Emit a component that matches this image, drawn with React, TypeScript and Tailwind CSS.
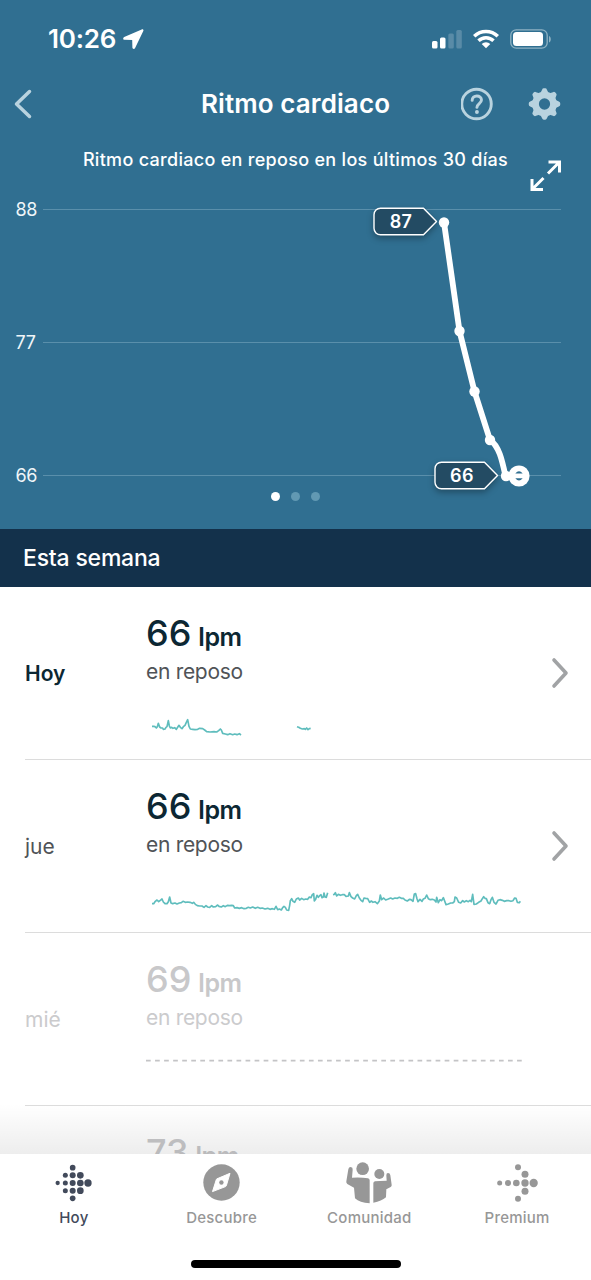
import clsx from "clsx";
import type { ReactNode } from "react";

type Day = {
	label: string;
	bpm: number;
	status: "today" | "done" | "locked";
	viewBox?: string;
	segments?: string[];
};

const days: Day[] = [
	{
		label: "Hoy",
		bpm: 66,
		status: "today",
		viewBox: "18 0 1128 105",
		segments: [
			"36,49 41,49 45,50 49,54 52,50 55,40 59,51 63,54 68,54 70,58 75,57 78,52 81,50 85,32 88,48 91,54 95,52 99,55 104,53 109,58 113,52 117,46 121,52 126,56 130,50 135,46 139,37 143,29 147,49 151,57 158,58 165,59 173,58 179,55 188,56 194,60 200,65 210,66 222,65 230,66 236,62 241,57 244,60 248,70 256,72 263,74 270,71 278,74 284,72 291,74 298,71 303,75",
			"471,50 476,52 481,55 487,57 493,56 496,58 500,54 504,59 508,56 512,55",
		],
	},
	{
		label: "jue",
		bpm: 66,
		status: "done",
		viewBox: "48 39 1128 105",
		segments: [
			"66,101 71,101 76,94 81,90 86,95 91,91 96,87 100,96 105,101 111,101 115,95 119,81 123,99 128,101 135,99 141,102 148,99 154,98 159,94 166,97 173,96 180,97 187,100 191,97 196,103 202,107 209,108 216,108 222,112 228,107 233,111 239,112 245,107 250,111 257,110 263,105 267,109 274,111 280,107 286,110 292,106 299,107 305,106 310,107 314,114 321,113 328,115 335,113 342,116 349,115 355,112 361,114 368,111 376,115 383,112 390,115 397,114 405,117 413,115 420,118 427,116 433,118 438,109 443,119 448,117 454,120 458,113 462,109 466,112 470,120 476,121 479,106 481,92 485,86 489,94 494,97 499,87 505,84 509,90 515,85 521,89 527,87 533,88 538,81 543,83 547,74 551,71 553,93 557,88 561,76 565,82 569,77 573,74 576,83 580,81 582,69 585,81 589,82 593,68",
			"609,74 613,73 616,68 620,78 625,73 631,76 637,74 643,74 648,79 655,78 658,68 663,80 668,84 674,87 679,77 683,73 688,84 693,91 698,95 702,84 707,85 713,86 719,97 724,93 729,97 735,95 742,101 748,93 751,75 755,89 761,84 767,90 775,87 782,84 788,87 795,84 802,85 808,82 814,85 820,85 825,90 832,93 838,88 843,89 849,94 853,72 857,71 861,86 864,95 870,88 876,94 880,87 885,85 890,75 895,86 901,89 907,88 913,90 918,96 920,82 925,98 930,89 935,92 940,83 944,93 948,104 955,102 962,99 968,99 973,95 975,81 980,84 986,97 992,99 998,92 1003,96 1009,92 1015,95 1020,91 1024,95 1028,73 1032,103 1039,102 1046,97 1053,93 1057,86 1061,80 1065,85 1069,86 1074,98 1079,101 1083,89 1087,82 1092,97 1098,102 1104,91 1110,89 1117,91 1123,94 1130,92 1137,92 1143,94 1149,92 1154,84 1158,85 1162,97 1168,98 1171,94",
		],
	},
	{ label: "mié", bpm: 69, status: "locked" },
];

const chartPoints = [
	[444, 32.5],
	[459.5, 141],
	[474.5, 201.5],
	[490, 250],
	[506, 286],
];

const hoyDots = [
	[174, 248, 6.5],
	[197, 225, 7.5],
	[197, 248, 7.5],
	[197, 271, 7.5],
	[219, 202, 8.5],
	[219, 225, 9],
	[219, 248, 9],
	[219, 271, 9],
	[219, 294, 8.5],
	[242, 225, 10],
	[242, 248, 10],
	[242, 271, 10],
	[265, 248, 11],
];

const premiumDots = [
	[599, 248, 7.5],
	[624, 248, 9],
	[649, 248, 10],
	[675, 248, 11],
	[701, 248, 12.5],
	[654, 201, 9],
	[675, 222, 10.5],
	[675, 273, 10.5],
	[654, 295, 9],
];

function StatusBar() {
	return (
		<div className="flex h-[78px] items-center justify-between pr-[39px] pl-[48px]">
			<div className="flex items-center gap-[7px]">
				<span className="text-[26px] leading-none font-semibold tracking-[-0.2px]">
					10:26
				</span>
				<svg width="21" height="20" viewBox="0 0 21 20" fill="#fff">
					<path d="M18.7.4 1.2 8C-.4 8.8 0 10.8 1.500 10.8l7.700.2.2 7.500c0 1.600 2 2 2.700.5L20.300 2.100C20.900.8 19.900-.1 18.700.4Z" />
				</svg>
			</div>
			<div className="flex items-center">
				<svg width="30" height="20" viewBox="0 0 30 20" fill="#fff">
					<rect x="0" y="12" width="5.5" height="7.5" rx="1.5" />
					<rect x="8" y="8.5" width="5.5" height="11" rx="1.5" />
					<rect x="16.3" y="4.5" width="5.5" height="15" rx="1.5" opacity=".2" />
					<rect x="24.3" y="1" width="5.5" height="18.5" rx="1.5" opacity=".2" />
				</svg>
				<svg className="ml-[11px]" width="26" height="20" viewBox="0 0 26 20">
					<g fill="none" stroke="#fff" strokeWidth="3.5">
						<path d="M1.2 7.2a17 17 0 0 1 23.6 0" />
						<path d="M5.5 11.8a10.8 10.8 0 0 1 15 0" />
					</g>
					<path d="M13 19.3 8.7 15a6.2 6.2 0 0 1 8.6 0Z" fill="#fff" />
				</svg>
				<svg className="ml-[11px]" width="42" height="20" viewBox="0 0 42 20">
					<rect
						x=".8"
						y=".8"
						width="36.4"
						height="18.4"
						rx="5.5"
						fill="none"
						stroke="#8fb3c4"
						strokeWidth="1.3"
					/>
					<rect x="3" y="3" width="30" height="14" rx="3.5" fill="#fff" />
					<path d="M39 7v6.4c2.4-.8 2.4-5.6 0-6.4Z" fill="#8fb3c4" />
				</svg>
			</div>
		</div>
	);
}

function GearIcon() {
	return (
		<svg width="34" height="34" viewBox="-17 -17 34 34">
			<circle r="9.3" fill="none" stroke="#b9d3df" strokeWidth="7" />
			{[0, 45, 90, 135, 180, 225, 270, 315].map((angle) => (
				<path
					key={angle}
					d="M-4-11.500-2.500-14.800Q-2-16.200-.8-16.200H.8Q2-16.200 2.500-14.800L4-11.500Z"
					fill="#b9d3df"
					transform={`rotate(${angle})`}
				/>
			))}
		</svg>
	);
}

function NavBar() {
	return (
		<div className="grid h-[52px] grid-cols-[100px_1fr_100px] items-center pr-[30px] pl-[14px]">
			<svg width="18" height="30" viewBox="0 0 18 30" fill="none">
				<path
					d="M15.5 2.5 2.5 15l13 12.5"
					stroke="#b9d3df"
					strokeWidth="3.5"
					strokeLinecap="round"
					strokeLinejoin="round"
				/>
			</svg>
			<h1 className="ml-[16px] text-center text-[26px] leading-none font-semibold tracking-[0.1px] whitespace-nowrap">
				Ritmo cardiaco
			</h1>
			<div className="flex items-center justify-end gap-[34px]">
				<svg width="34" height="34" viewBox="0 0 34 34" fill="none">
					<circle cx="16" cy="17" r="15.2" stroke="#b9d3df" strokeWidth="3" />
					<path
						d="M11.500 13.300c0-3 2.100-4.600 4.800-4.600s4.800 1.700 4.800 4.200c0 3.600-4.700 3.700-4.700 7.600"
						stroke="#b9d3df"
						strokeWidth="3"
						strokeLinecap="round"
					/>
					<circle cx="16.400" cy="25.300" r="2" fill="#b9d3df" />
				</svg>
				<GearIcon />
			</div>
		</div>
	);
}

function ChartFlag({ x, y, value }: { x: number; y: number; value: number }) {
	return (
		<g transform={`translate(${x} ${y})`}>
			<path
				d="M7-13.300H50L63 0 50 13.300H7a6.500 6.500 0 0 1-6.500-6.500V-6.800A6.500 6.500 0 0 1 7-13.300Z"
				fill="#234b63"
				stroke="#fff"
				strokeWidth="1.4"
				strokeLinejoin="round"
				className="drop-shadow-[0_3px_3px_rgba(0,0,0,0.3)]"
			/>
			<text
				x="27.5"
				y="6.5"
				textAnchor="middle"
				fill="#fff"
				className="text-[18px] font-semibold tracking-[0.4px]"
			>
				{value}
			</text>
		</g>
	);
}

function RestingChart() {
	return (
		<svg
			className="overflow-visible"
			width="591"
			height="298"
			viewBox="0 0 591 298"
		>
			{[88, 77, 66].map((value, i) => (
				<g key={value}>
					<text
						x="15.5"
						y={26 + i * 133}
						fill="#f0f6f9"
						className="text-[18px] tracking-[-0.3px]"
					>
						{value}
					</text>
					<path d={`M43 ${19.5 + i * 133}H561`} stroke="#5a8fab" />
				</g>
			))}
			<path
				d="M444 32.500 459.500 141 474.500 201.500 490 250C499 256 502 270 505.500 286H519"
				fill="none"
				stroke="#fff"
				strokeWidth="5.8"
				strokeLinejoin="round"
			/>
			{chartPoints.map(([cx, cy]) => (
				<circle key={cx} cx={cx} cy={cy} r="5.2" fill="#fff" />
			))}
			<circle cx="519" cy="286" r="10.6" fill="#fff" />
			<path
				d="M515.300 283.500q3.700-4.600 7.400 0ZM515.300 288.300q3.700 4.600 7.400 0Z"
				fill="#306f91"
			/>
			<ChartFlag x={373.5} y={31.5} value={87} />
			<ChartFlag x={434.5} y={285.5} value={66} />
		</svg>
	);
}

function Header() {
	return (
		<header className="relative h-[529px] bg-[#306f91] text-white">
			<StatusBar />
			<NavBar />
			<p className="h-[60px] text-center text-[18px] leading-[60px] font-medium tracking-[0.3px] whitespace-nowrap">
				Ritmo cardiaco en reposo en los últimos 30 días
			</p>
			<svg
				className="absolute top-[160px] right-[29px]"
				width="32"
				height="32"
				viewBox="0 0 32 32"
				fill="none"
				stroke="#fff"
				strokeWidth="3"
			>
				<path d="M18.500 2H29.500V12.500M29.500 2 18 13.500M2 19v10.500h11M2 29.500l11.500-11.500" />
			</svg>
			<RestingChart />
			<div className="flex h-[16px] items-center justify-center gap-[11px]">
				<span className="size-[9px] rounded-full bg-white" />
				<span className="size-[9px] rounded-full bg-[#6199b3]" />
				<span className="size-[9px] rounded-full bg-[#6199b3]" />
			</div>
		</header>
	);
}

function Bpm({ value, locked }: { value: number; locked: boolean }) {
	return (
		<p
			className={clsx(
				"text-[36px] leading-[44px] font-medium whitespace-nowrap",
				locked ? "text-[#c8c8ca]" : "text-[#0c2733]"
			)}
		>
			{value}
			<span className="ml-[7px] text-[25px] leading-none font-semibold tracking-[-0.5px]">
				lpm
			</span>
		</p>
	);
}

function DayRow({ day }: { day: Day }) {
	const locked = day.status === "locked";

	return (
		<li className="ml-[25px] flex h-[173px] items-center border-b border-[#dcdcdc] pr-[22px]">
			<span
				className={clsx(
					"w-[121px] text-[21px] leading-none",
					day.status === "today" && "font-semibold text-[#0c2733]",
					day.status === "done" && "text-[#505357]",
					locked && "text-[#cbcbcd]"
				)}
			>
				{day.label}
			</span>
			<div className="flex h-full w-[378px] flex-col pt-[24px]">
				<Bpm value={day.bpm} locked={locked} />
				<p
					className={clsx(
						"text-[21px] leading-[34px] tracking-[-0.3px]",
						locked ? "text-[#cbcbcd]" : "text-[#505357]"
					)}
				>
					en reposo
				</p>
				{day.segments && (
					<svg
						className="mt-[21px]"
						width="376"
						height="35"
						viewBox={day.viewBox}
						fill="none"
						stroke="#5fbdbd"
						strokeWidth="5"
						strokeLinejoin="round"
					>
						{day.segments.map((points) => (
							<polyline key={points} points={points} />
						))}
					</svg>
				)}
				{locked && (
					<svg className="mt-[21px]" width="378" height="10">
						<path
							d="M0 4.700H377"
							stroke="#c4c4c6"
							strokeWidth="1.7"
							strokeDasharray="4.700 4.350"
						/>
					</svg>
				)}
			</div>
			{!locked && (
				<svg className="ml-auto" width="18" height="32" viewBox="0 0 18 32" fill="none">
					<path
						d="M3 3 15 16 3 29"
						stroke="#a1a3a5"
						strokeWidth="3.6"
						strokeLinecap="round"
						strokeLinejoin="round"
					/>
				</svg>
			)}
		</li>
	);
}

function Dots({ dots }: { dots: number[][] }) {
	return dots.map(([cx, cy, r]) => (
		<circle key={`${cx}-${cy}`} cx={cx} cy={cy} r={r} />
	));
}

function Tab({
	label,
	active,
	children,
}: {
	label: string;
	active?: boolean;
	children: ReactNode;
}) {
	return (
		<li
			className={clsx(
				"flex flex-1 flex-col items-center",
				active ? "text-[#424a5b]" : "text-[#979797]"
			)}
		>
			<div className="flex h-[57px] items-center">{children}</div>
			<span className="-mt-[4px] text-[15px] leading-[21px] font-medium tracking-[0.25px]">
				{label}
			</span>
		</li>
	);
}

function TabBar() {
	return (
		<nav className="flex h-[126px] flex-col items-center bg-white">
			<ul className="flex h-[106px] w-full">
				<Tab label="Hoy" active>
					<svg width="37" height="38" viewBox="166 191 111 114" fill="currentColor">
						<Dots dots={hoyDots} />
					</svg>
				</Tab>
				<Tab label="Descubre">
					<svg width="37" height="37" viewBox="0 0 37 37">
						<circle cx="18.5" cy="18.5" r="18.2" fill="currentColor" />
						<path
							d="M27 9.300 14 14.800Q13.500 15 13.300 15.600L9.500 27.600 22.500 22.600Q23.100 22.300 23.300 21.800Z"
							fill="#fff"
							stroke="#fff"
							strokeLinejoin="round"
						/>
						<circle cx="18.4" cy="18.5" r="2.2" fill="currentColor" />
					</svg>
				</Tab>
				<Tab label="Comunidad">
					<svg width="46" height="42" viewBox="140 185 138 126" fill="currentColor">
						<circle cx="190" cy="205" r="19" />
						<circle cx="240" cy="221" r="15" />
						<path d="M147 207Q148 200 154 200 161 201 160 208L158 232Q184 230 206 234 211 235 211 240V309Q181 307 167 294L164 262 144 251Q140 248 141 243Z" />
						<path d="M222 307V249Q222 244 227 243 240 241 262 241L261 225Q261 218 266 218 272 218 273 225L277 253Q278 257 274 260L261 267 260 291Q247 303 222 307Z" />
					</svg>
				</Tab>
				<Tab label="Premium">
					<svg width="42" height="38" viewBox="588 191 126 114" fill="currentColor">
						<Dots dots={premiumDots} />
					</svg>
				</Tab>
			</ul>
			<div className="h-[8px] w-[210px] rounded-full bg-black" />
		</nav>
	);
}

export default function App() {
	return (
		<div className="h-[1280px] w-[591px] overflow-hidden bg-white font-['Inter',sans-serif]">
			<Header />
			<h2 className="h-[58px] bg-[#13314b] pl-[23px] text-[23px] leading-[58px] font-medium tracking-[-0.2px] text-white">
				Esta semana
			</h2>
			<main className="relative h-[567px] overflow-hidden">
				<ul>
					{days.map((day) => (
						<DayRow key={day.label} day={day} />
					))}
					{/* next day only peeks out above the tab bar */}
					<li className="h-[48px] overflow-hidden pt-[24px] pl-[146px]">
						<Bpm value={73} locked />
					</li>
				</ul>
				<div className="absolute inset-x-0 bottom-0 h-[50px] bg-linear-to-b from-black/0 to-black/7" />
			</main>
			<TabBar />
		</div>
	);
}
